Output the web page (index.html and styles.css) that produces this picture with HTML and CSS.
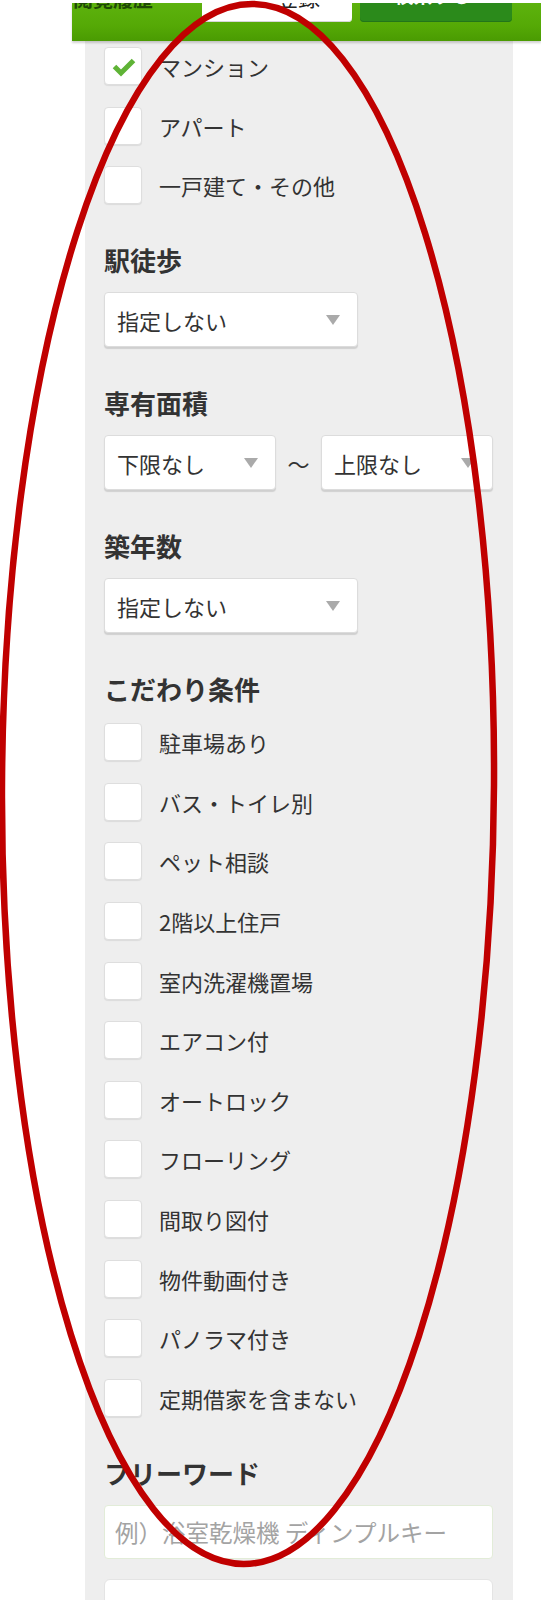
FILE: index.html
```html
<!DOCTYPE html>
<html lang="ja">
<head>
<meta charset="utf-8">
<title>検索条件</title>
<link rel="stylesheet" href="styles.css">
</head>
<body>
<div class="page">
  <header class="topbar">
    <div class="topbar-inner">
      <span class="history">閲覧履歴</span>
      <span class="btn btn-save"><span class="btn-label">登録</span></span>
      <span class="btn btn-search"><span class="btn-label">検索する</span></span>
    </div>
  </header>

  <main class="panel">
    <ul class="checks">
      <li class="check"><span class="box"><svg class="tick" width="36" height="36" viewBox="0 0 36 36"><polyline points="9.5,18.5 16,25 28.5,12.5" fill="none" stroke="#5fb336" stroke-width="5"/></svg></span><span class="label">マンション</span></li>
      <li class="check"><span class="box"></span><span class="label">アパート</span></li>
      <li class="check"><span class="box"></span><span class="label">一戸建て・その他</span></li>
    </ul>

    <section class="section">
      <h2 class="heading">駅徒歩</h2>
      <div class="select select-wide"><span class="select-text">指定しない</span><span class="arrow"></span></div>
    </section>

    <section class="section">
      <h2 class="heading">専有面積</h2>
      <div class="range">
        <div class="select select-half"><span class="select-text">下限なし</span><span class="arrow"></span></div>
        <span class="tilde">〜</span>
        <div class="select select-half"><span class="select-text">上限なし</span><span class="arrow"></span></div>
      </div>
    </section>

    <section class="section">
      <h2 class="heading">築年数</h2>
      <div class="select select-wide"><span class="select-text">指定しない</span><span class="arrow"></span></div>
    </section>

    <section class="section">
      <h2 class="heading">こだわり条件</h2>
      <ul class="checks checks-options">
        <li class="check"><span class="box"></span><span class="label">駐車場あり</span></li>
        <li class="check"><span class="box"></span><span class="label">バス・トイレ別</span></li>
        <li class="check"><span class="box"></span><span class="label">ペット相談</span></li>
        <li class="check"><span class="box"></span><span class="label">2階以上住戸</span></li>
        <li class="check"><span class="box"></span><span class="label">室内洗濯機置場</span></li>
        <li class="check"><span class="box"></span><span class="label">エアコン付</span></li>
        <li class="check"><span class="box"></span><span class="label">オートロック</span></li>
        <li class="check"><span class="box"></span><span class="label">フローリング</span></li>
        <li class="check"><span class="box"></span><span class="label">間取り図付</span></li>
        <li class="check"><span class="box"></span><span class="label">物件動画付き</span></li>
        <li class="check"><span class="box"></span><span class="label">パノラマ付き</span></li>
        <li class="check"><span class="box"></span><span class="label">定期借家を含まない</span></li>
      </ul>
    </section>

    <section class="section">
      <h2 class="heading">フリーワード</h2>
      <input class="freeword" type="text" placeholder="例）浴室乾燥機 ディンプルキー">
      <div class="next-box"></div>
    </section>
  </main>

  <svg class="annotation" width="541" height="1600" viewBox="0 0 541 1600">
    <ellipse cx="248" cy="784" rx="246" ry="780" transform="rotate(0.33 248 784)" fill="none" stroke="#c00000" stroke-width="6.5"/>
  </svg>
</div>
</body>
</html>
```

FILE: styles.css
```css
* {
  box-sizing: border-box;
}

html,
body {
  margin: 0;
  padding: 0;
  background: #ffffff;
}

body {
  font-family: "Noto Sans CJK JP", "Noto Sans", sans-serif;
  color: #333333;
}

.page {
  position: relative;
  width: 541px;
  height: 1600px;
  overflow: hidden;
}

/* ---------- top green bar ---------- */
.topbar {
  position: relative;
  z-index: 1;
  margin: 3px 0 0 72px;
  height: 38px;
  background: linear-gradient(#5db20d, #55a906 60%, #4a9b02);
  box-shadow: 0 2px 2px rgba(0, 0, 0, 0.18);
  overflow: hidden;
}

.topbar-inner {
  display: flex;
  align-items: flex-start;
}

.history {
  flex: none;
  width: 130px;
  padding-left: 1px;
  margin-top: -15px;
  font-size: 20px;
  line-height: 22px;
  font-weight: 700;
  color: #1f4a05;
  white-space: nowrap;
}

.btn {
  flex: none;
  height: 19px;
  display: flex;
  justify-content: center;
  align-items: flex-start;
  border-radius: 0 0 4px 4px;
  overflow: hidden;
}

.btn-save {
  width: 150px;
  padding-left: 42px;
  background: #ffffff;
  box-shadow: inset 0 -1px 0 #d6d6d6;
  color: #222222;
}

.btn-save .btn-label {
  font-size: 22px;
  line-height: 24px;
  margin-top: -19px;
}

.btn-search {
  width: 152px;
  margin-left: 8px;
  background: #2b8a1b;
  box-shadow: inset 0 -1px 0 #23751a;
  color: #ffffff;
}

.btn-search .btn-label {
  font-size: 19px;
  line-height: 22px;
  margin-top: -19px;
  margin-right: 7px;
  font-weight: 700;
}

.btn-label {
  white-space: nowrap;
}

/* ---------- grey panel ---------- */
.panel {
  display: block;
  margin-left: 85px;
  width: 428px;
  min-height: 1600px;
  padding: 6px 20px 0 19px;
  background: #eeeeee;
}

.checks {
  list-style: none;
  margin: 0;
  padding: 0;
  display: flex;
  flex-direction: column;
  gap: 21.6px;
}

.checks-options {
  padding-top: 2px;
}

.check {
  display: flex;
  align-items: center;
  gap: 17px;
  height: 38px;
}

.box {
  flex: none;
  width: 38px;
  height: 38px;
  display: flex;
  align-items: center;
  justify-content: center;
  background: #ffffff;
  border: 1px solid #dedede;
  border-radius: 4px;
  box-shadow: 0 1px 1px rgba(0, 0, 0, 0.08);
}

.tick {
  display: block;
}

.label {
  font-size: 22px;
  line-height: 30px;
  color: #333333;
  white-space: nowrap;
}

.section {
  margin-top: 41px;
}

.heading {
  margin: 0 0 17px;
  font-size: 26px;
  line-height: 30px;
  font-weight: 700;
  color: #333333;
}

.select {
  height: 55px;
  display: flex;
  align-items: center;
  justify-content: space-between;
  padding: 0 17px 0 12px;
  background: #ffffff;
  border: 1px solid #dcdcdc;
  border-radius: 4px;
  box-shadow: 0 2px 1px rgba(0, 0, 0, 0.13);
}

.select-wide {
  width: 254px;
}

.select-half {
  flex: none;
  width: 172px;
}

.select-text {
  font-size: 22px;
  line-height: 30px;
  color: #333333;
  white-space: nowrap;
}

.arrow {
  flex: none;
  width: 0;
  height: 0;
  border-left: 7px solid transparent;
  border-right: 7px solid transparent;
  border-top: 10px solid #aaaaaa;
}

.range {
  display: flex;
  align-items: center;
}

.tilde {
  flex: 1;
  text-align: center;
  font-size: 22px;
  line-height: 30px;
  color: #333333;
}

.freeword {
  display: block;
  width: 100%;
  height: 54px;
  margin: 0;
  padding: 0 10px;
  font-family: "Noto Sans CJK JP", "Noto Sans", sans-serif;
  font-size: 23.5px;
  color: #333333;
  background: #ffffff;
  border: 1px solid #e2ecd8;
  border-radius: 4px;
  outline: none;
}

.freeword::placeholder {
  color: #a3a3a3;
}

.next-box {
  margin-top: 20px;
  height: 60px;
  background: #ffffff;
  border: 1px solid #e4e4e4;
  border-radius: 6px;
}

/* ---------- red annotation ---------- */
.annotation {
  position: absolute;
  z-index: 2;
  left: 0;
  top: 0;
  pointer-events: none;
}
```
